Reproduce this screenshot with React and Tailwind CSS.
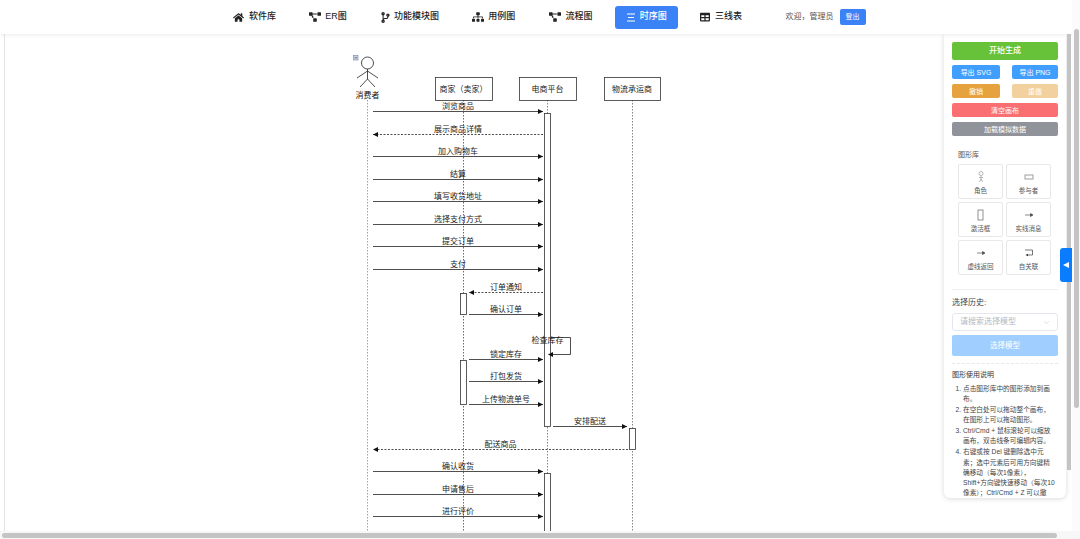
import React from 'react';
import { FaHome, FaProjectDiagram, FaCodeBranch, FaSitemap, FaTable } from 'react-icons/fa';
import { ChevronDown } from 'lucide-react';

const font = { fontFamily: '"Liberation Sans", "Noto Sans CJK SC", sans-serif' };

const navItems = [
  { label: '软件库', Icon: FaHome, size: 11, boxW: 'w-[16px]' },
  { label: 'ER图', Icon: FaProjectDiagram, size: 12, boxW: 'w-[16px]' },
  { label: '功能模块图', Icon: FaCodeBranch, size: 11, boxW: 'w-[14px]' },
  { label: '用例图', Icon: FaSitemap, size: 12, boxW: 'w-[16px]' },
  { label: '流程图', Icon: FaProjectDiagram, size: 12, boxW: 'w-[17px]' },
  { label: '时序图', Icon: BarsIcon, size: 10, boxW: 'w-[14px]', active: true },
  { label: '三线表', Icon: FaTable, size: 10, boxW: 'w-[15px]' },
];

function BarsIcon() {
  return (
    <svg width="10" height="9" viewBox="0 0 10 9" stroke="currentColor" strokeWidth="1">
      <path d="M1 1h8M2 4.500h6M1 8h8" />
    </svg>
  );
}

const boxes = [
  { label: '商家（卖家）', x: 435, w: 57 },
  { label: '电商平台', x: 519, w: 57 },
  { label: '物流承运商', x: 604, w: 56 },
];

const messages = [
  { label: '浏览商品', y: 111, from: 373, to: 543 },
  { label: '展示商品详情', y: 134, from: 543, to: 373, dashed: true },
  { label: '加入购物车', y: 156, from: 373, to: 543 },
  { label: '结算', y: 179, from: 373, to: 543 },
  { label: '填写收货地址', y: 201, from: 373, to: 543 },
  { label: '选择支付方式', y: 224, from: 373, to: 543 },
  { label: '提交订单', y: 246, from: 373, to: 543 },
  { label: '支付', y: 269, from: 373, to: 543 },
  { label: '订单通知', y: 292, from: 543, to: 469, dashed: true },
  { label: '确认订单', y: 314, from: 469, to: 543 },
  { label: '锁定库存', y: 359, from: 469, to: 543 },
  { label: '打包发货', y: 381, from: 469, to: 543 },
  { label: '上传物流单号', y: 404, from: 469, to: 543 },
  { label: '安排配送', y: 426, from: 553, to: 627 },
  { label: '配送商品', y: 449, from: 628, to: 373, dashed: true },
  { label: '确认收货', y: 471, from: 373, to: 543 },
  { label: '申请售后', y: 494, from: 373, to: 543 },
  { label: '进行评价', y: 516, from: 373, to: 543 },
];

const activations = [
  { x: 544.5, y: 113.5, w: 6, h: 313 },
  { x: 544.5, y: 473.5, w: 6, h: 70 },
  { x: 460.5, y: 293.5, w: 6, h: 21 },
  { x: 460.5, y: 360.5, w: 6, h: 44 },
  { x: 629.5, y: 428.5, w: 6, h: 21 },
];

function arrowHead(x, y, dir) {
  return `${x},${y} ${x - dir * 5},${y - 2.500} ${x - dir * 5},${y + 2.500}`;
}

function Diagram() {
  return (
    <svg width="939" height="497" viewBox="5 34 939 497" className="block" style={font}>
      <g stroke="#666" strokeWidth="0.800" strokeDasharray="1.500 1.500">
        <path d="M367.500 100V531" stroke="#888" />
        <path d="M463.500 100V531" stroke="#444" />
        <path d="M547.500 100V531" />
        <path d="M632.500 100V531" />
      </g>

      {/* actor */}
      <g stroke="#222" strokeWidth="0.800" fill="none">
        <circle cx="367.500" cy="63" r="6" />
        <path d="M367.500 69V79M357 78L367.500 71L378 78M367.500 79L360 87M367.500 79L375 87" />
      </g>
      <rect x="353.500" y="55.500" width="4.500" height="4.500" fill="#c8d4e6" stroke="#6f86a5" strokeWidth="0.600" />
      <path d="M354.500 57.750h2.500" stroke="#334" strokeWidth="0.600" />
      <text x="367.500" y="98" textAnchor="middle" fontSize="8" fill="#111">消费者</text>

      {boxes.map((b) => (
        <g key={b.label}>
          <rect x={b.x + 0.5} y="77.500" width={b.w} height="23" fill="#fff" stroke="#333" strokeWidth="0.800" />
          <text x={b.x + b.w / 2} y="92" textAnchor="middle" fontSize="8" fill="#222">{b.label}</text>
        </g>
      ))}

      {activations.map((a) => (
        <rect key={a.y} x={a.x} y={a.y} width={a.w} height={a.h} fill="#fff" stroke="#333" strokeWidth="0.800" />
      ))}

      {messages.map((m) => {
        const dir = m.to > m.from ? 1 : -1;
        return (
          <g key={m.label}>
            <path
              d={`M${m.from} ${m.y + 0.5}H${m.to}`}
              stroke="#222"
              strokeWidth="0.800"
              strokeDasharray={m.dashed ? '2 1.500' : undefined}
            />
            <polygon points={arrowHead(m.to, m.y + 0.5, dir)} fill="#111" />
            <text x={(m.from + m.to) / 2} y={m.y - 2} textAnchor="middle" fontSize="8" fill="#222">{m.label}</text>
          </g>
        );
      })}

      {/* self message */}
      <path d="M551 337.500H570.500V354.500H551" fill="none" stroke="#222" strokeWidth="0.800" />
      <polygon points={arrowHead(548, 354.5, -1)} fill="#111" />
      <text x="547.500" y="343" textAnchor="middle" fontSize="8" fill="#222">检查库存</text>
    </svg>
  );
}

const shapes = [
  {
    label: '角色',
    icon: (
      <svg width="8" height="12" viewBox="0 0 8 12" fill="none" stroke="#999" strokeWidth="0.700">
        <circle cx="4" cy="2.500" r="2" />
        <path d="M4 4.500V8M2 6.500h4M4 8L2.500 11M4 8l1.500 3" />
      </svg>
    ),
  },
  {
    label: '参与者',
    icon: (
      <svg width="10" height="6" viewBox="0 0 10 6" fill="none" stroke="#888" strokeWidth="0.800">
        <rect x="1" y="1" width="8" height="4" />
      </svg>
    ),
  },
  {
    label: '激活框',
    icon: (
      <svg width="7" height="12" viewBox="0 0 7 12" fill="none" stroke="#777" strokeWidth="0.800">
        <rect x="1" y="1" width="5" height="10" />
      </svg>
    ),
  },
  {
    label: '实线消息',
    icon: (
      <svg width="10" height="6" viewBox="0 0 10 6" stroke="#555" strokeWidth="0.700">
        <path d="M1 3H7" />
        <polygon points="9,3 6.500,1.500 6.500,4.500" fill="#333" />
      </svg>
    ),
  },
  {
    label: '虚线返回',
    icon: (
      <svg width="10" height="6" viewBox="0 0 10 6" stroke="#555" strokeWidth="0.700">
        <path d="M1 3H7" />
        <polygon points="9,3 6.500,1.500 6.500,4.500" fill="#333" />
      </svg>
    ),
  },
  {
    label: '自关联',
    icon: (
      <svg width="10" height="8" viewBox="0 0 10 8" fill="none" stroke="#555" strokeWidth="0.800">
        <path d="M1 1H8.500V6H3" />
        <polygon points="1.500,6 4,4.700 4,7.300" fill="#333" stroke="none" />
      </svg>
    ),
  },
];

const tips = [
  ['点击图形库中的图形添加到画', '布。'],
  ['在空白处可以拖动整个画布，', '在图形上可以拖动图形。'],
  ['Ctrl/Cmd + 鼠标滚轮可以缩放', '画布，双击线条可编辑内容。'],
  ['右键或按 Del 键删除选中元', '素；选中元素后可用方向键精', '确移动（每次1像素），', 'Shift+方向键快速移动（每次10', '像素）；Ctrl/Cmd + Z 可以撤'],
];

function Sidebar() {
  return (
    <aside className="w-[122px] h-[464px] shrink-0 bg-white rounded-b-md shadow-[0_1px_5px_rgba(0,0,0,0.15)] overflow-hidden px-[8px] pt-[8px] text-[7px] leading-none">
      <button className="w-full h-[18px] rounded-[2px] bg-[#67c23a] text-white text-[8px] font-medium block">开始生成</button>
      <div className="flex justify-between mt-[5px]">
        <button className="w-[48px] h-[14px] rounded-[2px] bg-[#409eff] text-white">导出 SVG</button>
        <button className="w-[46px] h-[14px] rounded-[2px] bg-[#409eff] text-white">导出 PNG</button>
      </div>
      <div className="flex justify-between mt-[5px]">
        <button className="w-[48px] h-[14px] rounded-[2px] bg-[#e6a23c] text-white">撤销</button>
        <button className="w-[46px] h-[14px] rounded-[2px] bg-[#f3d19e] text-white">重做</button>
      </div>
      <button className="w-full h-[14px] mt-[5px] rounded-[2px] bg-[#f96f72] text-white block">清空画布</button>
      <button className="w-full h-[14px] mt-[5px] rounded-[2px] bg-[#909399] text-white block">加载模拟数据</button>

      <div className="mt-[15px] pl-[6px] text-[#555] leading-[8px]">图形库</div>
      <div className="grid grid-cols-[45px_45px] gap-x-[3px] gap-y-[3px] ml-[6px] mt-[5px]">
        {shapes.map((s) => (
          <div key={s.label} className="h-[35px] border border-[#e8e8e8] rounded-[2px] flex flex-col items-center text-[#555] text-[6.500px]">
            <div className="h-[23px] flex items-center justify-center">{s.icon}</div>
            <span>{s.label}</span>
          </div>
        ))}
      </div>

      <div className="mt-[14px] border-t border-[#eee]" />
      <div className="mt-[9px] text-[8px] text-[#444] leading-[8px]">选择历史:</div>
      <div className="mt-[6px] h-[18px] border border-[#e4e7ed] rounded-[3px] flex items-center justify-between pl-[7px] pr-[6px] text-[#b5b8bf] text-[8px]">
        <span>请搜索选择模型</span>
        <ChevronDown size={9} strokeWidth={1.500} className="text-[#c0c4cc]" />
      </div>
      <button className="w-full h-[21px] mt-[4px] rounded-[2px] bg-[#a0cfff] text-white text-[7.500px] block">选择模型</button>
      <div className="mt-[7px] border-t border-dashed border-[#e8e8e8]" />
      <div className="mt-[7px] text-[7px] text-[#333] leading-[8px]">图形使用说明</div>
      <ol className="mt-[5px] pl-[11px] list-decimal text-[6.700px] leading-[10.300px] text-[#444]">
        {tips.map((lines) => (
          <li key={lines[0]} className="mb-[0.500px]">
            {lines.map((line) => (
              <span key={line} className="block whitespace-nowrap">{line}</span>
            ))}
          </li>
        ))}
      </ol>
    </aside>
  );
}

export default function App() {
  return (
    <div className="relative w-[1080px] h-[539px] overflow-hidden bg-white" style={font}>
      <header className="relative z-10 h-[34px] flex items-center pl-[222px] bg-white shadow-[0_1px_4px_rgba(0,0,0,0.08)]">
        <nav className="flex items-center gap-[11.250px]">
          {navItems.map(({ label, Icon, size, boxW, active }) => (
            <a
              key={label}
              className={`h-[23px] px-[11px] flex items-center rounded-[3px] text-[9px] font-medium ${active ? 'bg-[#3b82f6] text-white' : 'text-[#222]'}`}
            >
              <span className={`${boxW} flex items-center`}>
                <Icon size={size} />
              </span>
              {label}
            </a>
          ))}
        </nav>
        <span className="ml-[32.500px] text-[8px] text-[#555]">欢迎，管理员</span>
        <button className="ml-[6px] w-[26px] h-[16px] rounded-[2px] bg-[#3b82f6] text-white text-[7px]">登出</button>
      </header>

      <main className="flex h-[505px]">
        <div className="ml-[4px] w-[940px] border-l border-[#e5e5e5] overflow-hidden">
          <Diagram />
        </div>
        <Sidebar />
      </main>

      {/* scrollbars */}
      <div className="absolute z-20 left-[1072px] top-0 w-[8px] h-[539px] bg-[#fbfbfb]" />
      <div className="absolute z-20 left-[1067px] top-[34px] w-[4px] h-[436px] bg-[#c4c4c4]" />
      <div className="absolute z-20 left-[1074px] top-[29px] w-[5px] h-[379px] bg-[#c4c4c4] rounded-full" />
      <div className="absolute z-20 left-0 top-[531px] w-[1080px] h-[8px] bg-[#f7f7f7]" />
      <div className="absolute z-20 left-[2px] top-[533px] w-[1055px] h-[5px] bg-[#c4c4c4] rounded-full" />

      {/* panel toggle tab */}
      <div className="absolute z-30 left-[1060px] top-[248px] w-[12px] h-[34px] bg-[#0a7cff] rounded-l-[3px] flex items-center justify-center">
        <span className="block w-0 h-0 border-y-[3.500px] border-y-transparent border-r-[6px] border-r-white" />
      </div>
    </div>
  );
}
